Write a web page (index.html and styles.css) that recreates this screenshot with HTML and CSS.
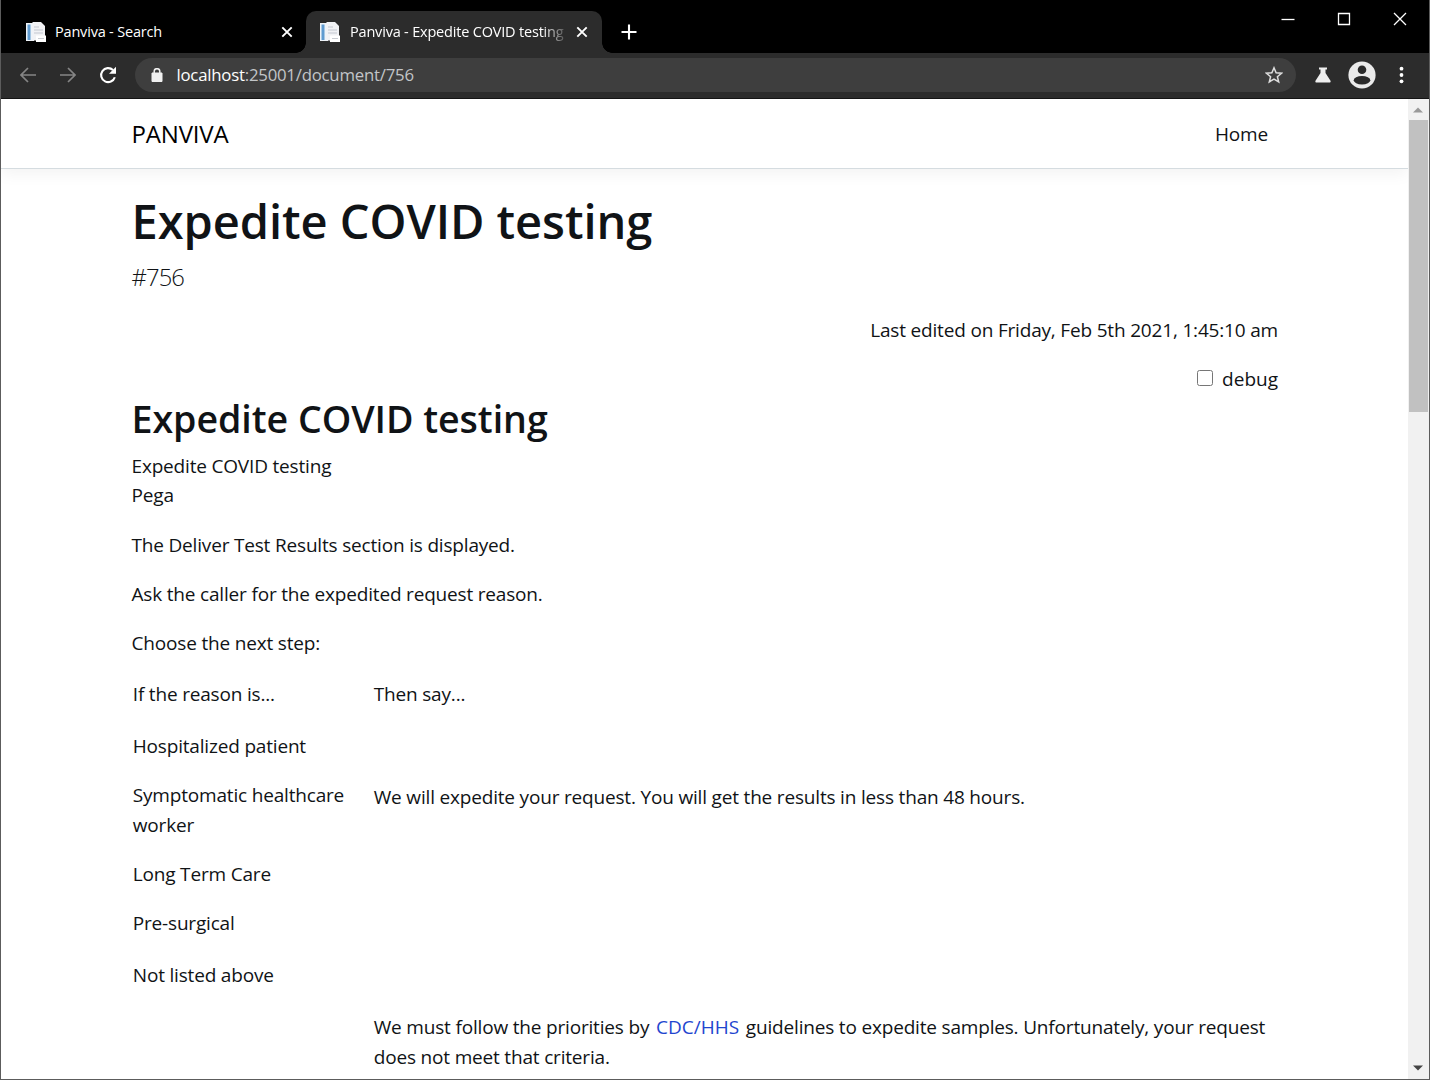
FILE: index.html
```html
<!DOCTYPE html>
<html lang="en">
<head>
<meta charset="utf-8">
<title>Panviva - Expedite COVID testing</title>
<link rel="stylesheet" href="styles.css">
</head>
<body>
<svg class="defs" width="0" height="0" aria-hidden="true">
  <symbol id="doc" viewBox="0 0 20 20">
    <path d="M0 1h8v18H0z" fill="#eef3f8"/>
    <path d="M1.500 2.500h3v15.500h-3z" fill="#5f9bd0"/>
    <path d="M6.500 0h8.500l4 4v14.500H6.500z" fill="#f1f2f5"/>
    <path d="M8 5h5M8 8h9M8 11h9" stroke="#c3c7d0" stroke-width="1"/>
    <path d="M10 13.500h10V20H10z" fill="#fff"/>
    <path d="M12 16.500h6" stroke="#c9ccd2"/>
  </symbol>
  <symbol id="close" viewBox="0 0 12 12"><path d="M1.3 1.3l9.4 9.4M10.7 1.3L1.3 10.7" stroke="#fff" stroke-width="1.9"/></symbol>
</svg>
<div class="window">
  <header class="titlebar">
    <div class="tab"><svg class="favicon"><use href="#doc"/></svg><span class="tab-title">Panviva - Search</span><svg class="tab-close"><use href="#close"/></svg></div>
    <div class="tab active"><svg class="favicon"><use href="#doc"/></svg><span class="tab-title fade">Panviva - Expedite COVID testing</span><svg class="tab-close"><use href="#close"/></svg></div>
    <svg class="new-tab" viewBox="0 0 16 16"><path d="M8 .5v15M.5 8h15" stroke="#fff" stroke-width="2.1"/></svg>
    <div class="controls">
      <svg viewBox="0 0 14 14"><path d="M.5 7.5h13" stroke="#fff" stroke-width="1.3"/></svg>
      <svg viewBox="0 0 14 14"><path d="M1.5 1.5h11v11h-11z" fill="none" stroke="#fff" stroke-width="1.3"/></svg>
      <svg viewBox="0 0 14 14"><path d="M1 1l12 12M13 1L1 13" stroke="#fff" stroke-width="1.3"/></svg>
    </div>
  </header>
  <div class="toolbar">
    <svg class="nav-icon" viewBox="0 0 16 16"><path d="M16 8H1.5M8 1L1 8l7 7" fill="none" stroke="#858585" stroke-width="1.7"/></svg>
    <svg class="nav-icon" viewBox="0 0 16 16"><path d="M0 8h14.5M8 1l7 7-7 7" fill="none" stroke="#858585" stroke-width="1.7"/></svg>
    <svg class="nav-icon reload" viewBox="0 0 18 18"><path d="M15.8 11.2A7 7 0 1 1 14 4.1" fill="none" stroke="#fff" stroke-width="2.1"/><path d="M17 .8v7h-7z" fill="#fff"/></svg>
    <div class="address">
      <svg class="lock" viewBox="0 0 12 14"><path d="M1 5h10v8.5H1z" fill="#f1f1f1" stroke="#f1f1f1" stroke-linejoin="round"/><path d="M3.2 5V3.5a2.8 2.8 0 0 1 5.6 0V5" fill="none" stroke="#f1f1f1" stroke-width="1.5"/></svg>
      <span class="url"><b>localhost</b>:25001/document/756</span>
      <svg class="star" viewBox="0 0 18 18"><path d="M9 1.8l2.1 4.9 5.4.5-4.1 3.5 1.3 5.2L9 13.100l-4.700 2.800 1.300-5.200L1.500 7.200l5.400-.5z" fill="none" stroke="#ddd" stroke-width="1.5"/></svg>
    </div>
    <svg class="flask" viewBox="0 0 16 16"><path d="M4 .5h8v2h-1.500V6l5 7.700c.5 1-.1 1.800-1 1.800h-13c-.9 0-1.500-.8-1-1.800l5-7.700V2.500H4z" fill="#eee"/></svg>
    <svg class="avatar" viewBox="0 0 28 28"><circle cx="14" cy="14" r="13.600" fill="#ebebeb"/><circle cx="14" cy="8.700" r="4.300" fill="#2b2b2b"/><ellipse cx="14" cy="19.300" rx="8.300" ry="4.200" fill="#2b2b2b"/></svg>
    <svg class="menu" viewBox="0 0 4 18"><circle cx="2" cy="2.700" r="1.900" fill="#fff"/><circle cx="2" cy="9" r="1.900" fill="#fff"/><circle cx="2" cy="15.300" r="1.900" fill="#fff"/></svg>
  </div>
  <div class="viewport">
    <div class="page">
      <nav class="navbar"><span class="brand">PANVIVA</span><span class="home">Home</span></nav>
      <main class="content">
        <h1>Expedite COVID testing</h1>
        <p class="lead">#756</p>
        <p class="edited">Last edited on Friday, Feb 5th 2021, 1:45:10 am</p>
        <label class="debug"><input type="checkbox"><span>debug</span></label>
        <h2>Expedite COVID testing</h2>
        <p>Expedite COVID testing<br>Pega</p>
        <p>The Deliver Test Results section is displayed.</p>
        <p>Ask the caller for the expedited request reason.</p>
        <p>Choose the next step:</p>
        <table>
          <tr><td class="reason"><p>If the reason is...</p></td><td><p>Then say...</p></td></tr>
          <tr><td class="reason"><p>Hospitalized patient</p><p>Symptomatic healthcare worker</p><p>Long Term Care</p><p>Pre-surgical</p></td><td class="answer"><p>We will expedite your request. You will get the results in less than 48 hours.</p></td></tr>
          <tr><td class="reason"><p>Not listed above</p></td><td></td></tr>
          <tr><td></td><td><p>We must follow the priorities by <a>CDC/HHS</a> guidelines to expedite samples. Unfortunately, your request does not meet that criteria.</p></td></tr>
        </table>
      </main>
    </div>
    <div class="scrollbar">
      <svg class="arrow" viewBox="0 0 18 20"><path d="M4 13l5-5 5 5z" fill="#999"/></svg>
      <div class="thumb"></div>
      <svg class="arrow end" viewBox="0 0 18 20"><path d="M4 7h10l-5 5z" fill="#444"/></svg>
    </div>
  </div>
</div>
</body>
</html>
```
FILE: styles.css
```css
* { box-sizing: border-box; }
body { margin: 0; width: 1430px; height: 1080px; overflow: hidden; font-family: "Open Sans", sans-serif; font-size: 19px; letter-spacing: -.18px; line-height: 29.6px; color: #101316; background: #fff; }
.defs { position: absolute; }
.window { display: flex; flex-direction: column; height: 1080px; border: solid #5c5c5c; border-width: 0 1px 1px; }
.titlebar { display: flex; height: 53px; padding-top: 11px; background: #000; color: #fff; flex: none; }
.tab { display: flex; align-items: center; width: 295px; height: 42px; padding: 0 13px 0 15px; margin-left: 10px; font-size: 14.500px; letter-spacing: -.19px; }
.tab.active { position: relative; width: 296px; padding: 0 14px; margin-left: 0; background: #2c2c2c; border-radius: 10px 10px 0 0; }
.tab.active::before, .tab.active::after { content: ""; position: absolute; bottom: 0; width: 10px; height: 10px; }
.tab.active::before { left: -10px; background: radial-gradient(circle at 0 0, transparent 9.500px, #2c2c2c 10px); }
.tab.active::after { right: -10px; background: radial-gradient(circle at 100% 0, transparent 9.500px, #2c2c2c 10px); }
.favicon { width: 20px; height: 20px; margin-right: 9px; flex: none; }
.active .favicon { margin-right: 10px; }
.tab-title { white-space: nowrap; }
.fade { width: 214px; overflow: hidden; -webkit-mask-image: linear-gradient(90deg, #000 192px, transparent 220px); mask-image: linear-gradient(90deg, #000 192px, transparent 220px); }
.tab-close { width: 12px; height: 12px; margin-left: auto; flex: none; }
.new-tab { width: 16px; height: 16px; margin: 13px 0 0 19px; }
.controls { display: flex; gap: 42px; margin: 1px 22px 0 auto; }
.controls svg { width: 14px; height: 14px; }
.toolbar { display: flex; align-items: center; height: 46px; padding: 0 25px 1px 19px; background: #2c2c2c; border-bottom: 1px solid #141414; flex: none; }
.nav-icon { width: 16px; height: 16px; margin-right: 24px; }
.reload { width: 18px; height: 18px; margin: 0 18px 0 -1.500px; }
.address { display: flex; align-items: center; width: 1161px; height: 34px; padding: 0 13px 0 16px; border-radius: 17px; background: #3e3e3e; }
.lock { width: 12px; height: 14px; margin-right: 14px; }
.url { color: #c2c5c8; font-size: 16.800px; letter-spacing: -.23px; }
.url b { font-weight: 400; color: #fff; }
.star { width: 18px; height: 18px; margin-left: auto; }
.flask { width: 16px; height: 16px; margin-left: 19.500px; }
.avatar { width: 28px; height: 28px; margin-left: 17px; }
.menu { width: 5px; height: 18px; margin-left: auto; }
.viewport { display: flex; flex: 1; min-height: 0; }
.page { flex: 1; overflow: hidden; }
.navbar { display: flex; justify-content: space-between; align-items: center; height: 70px; padding: 2px 140px 0 130.500px; border-bottom: 1px solid #d5dce0; box-shadow: 0 5px 15px rgba(0,0,0,.05); }
.brand { font-size: 24px; color: #000; padding-bottom: 2px; }
.content { padding: 24px 130px 0 130.500px; }
h1, h2 { margin: 0; font-weight: 600; line-height: 1.2; letter-spacing: -.05px; }
h1 { font-size: 47px; height: 66px; }
h2 { font-size: 37.600px; height: 56.700px; padding-top: 1px; }
p { margin: 0 0 19.750px; }
.lead { font-size: 23.800px; font-weight: 300; letter-spacing: -.9px; line-height: 37px; margin: 0 0 20px; }
.edited { text-align: right; }
.debug { display: flex; justify-content: flex-end; align-items: center; letter-spacing: 0; }
.debug input { width: 16px; height: 16px; margin: 0 9px 4px 0; }
table { border-collapse: collapse; width: 1147px; }
td { padding: 1.250px; vertical-align: top; }
.reason { width: 241px; padding-right: 20px; }
.answer { padding-top: 53px; }
a { color: #1f46cf; letter-spacing: 0; margin: 0 2px; }
.scrollbar { display: flex; flex-direction: column; width: 21px; padding-left: 1px; background: #f1f1f1; }
.arrow { width: 18px; height: 21px; }
.thumb { width: 19px; height: 292px; background: #c1c1c1; }
.end { margin-top: auto; }
```
